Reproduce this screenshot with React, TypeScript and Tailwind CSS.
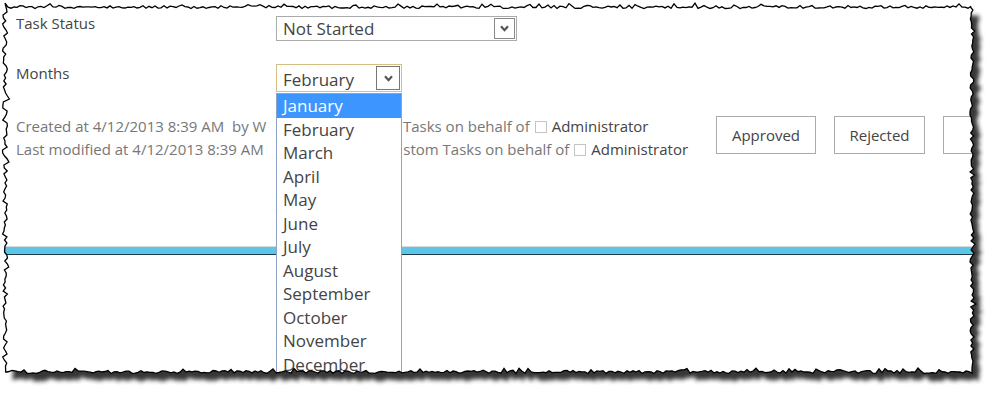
import React from "react";

const MONTHS = [
  "January", "February", "March", "April", "May", "June",
  "July", "August", "September", "October", "November", "December",
];

const FONT = { fontFamily: '"Open Sans", "Noto Sans", sans-serif' };

// torn paper edge, deterministic
function tornPath() {
  let s = 12345;
  const r = () => {
    s = (s * 1664525 + 1013904223) >>> 0;
    return s / 4294967296;
  };
  const pts: [number, number][] = [];
  const L = 5, T = 7, R = 972, B = 372;
  for (let x = L; x < R; x += 3) pts.push([x, T + (r() - 0.5) * 3 + (r() < 0.08 ? -2.5 : 0)]);
  for (let y = T; y < B; y += 3) pts.push([R + (r() - 0.5) * 4 + (r() < 0.1 ? 2 : 0), y]);
  for (let x = R; x > L; x -= 3) pts.push([x, B + (r() - 0.5) * 3 + (r() < 0.08 ? -2.5 : 0)]);
  for (let y = B; y > T; y -= 3) pts.push([L + (r() - 0.5) * 5 + (r() < 0.12 ? 2.5 : 0), y]);
  return "M" + pts.map(([x, y]) => `${x.toFixed(1)} ${y.toFixed(1)}`).join("L") + "Z";
}

function TornEdge() {
  const poly = tornPath();
  const outer = "M0 0H1000V403H0Z";
  return (
    <svg className="pointer-events-none absolute inset-0 z-20" width="1000" height="403" viewBox="0 0 1000 403">
      <defs>
        <clipPath id="outside">
          <path d={`${outer} ${poly}`} clipRule="evenodd" />
        </clipPath>
        <filter id="blur" x="-5%" y="-5%" width="110%" height="110%">
          <feGaussianBlur stdDeviation="2.2" />
        </filter>
      </defs>
      <path d={`${outer} ${poly}`} fill="#fff" fillRule="evenodd" />
      <g clipPath="url(#outside)">
        <path d={poly} transform="translate(7 8)" fill="#222" opacity="0.9" filter="url(#blur)" />
      </g>
      <path d={poly} fill="none" stroke="#000" strokeWidth="1.3" />
    </svg>
  );
}

function Chevron() {
  return (
    <svg width="9" height="7" viewBox="0 0 9 7">
      <path d="M1 1.2 L4.5 5.2 L8 1.2" fill="none" stroke="#555" strokeWidth="2.2" strokeLinejoin="miter" />
    </svg>
  );
}

function Checkbox() {
  return <span className="mx-[5px] inline-block h-[12px] w-[12px] translate-y-[1px] border border-[#c4c4c4] bg-white" />;
}

export default function App() {
  return (
    <div className="relative h-[403px] w-[1000px] overflow-hidden bg-white text-[#444]" style={FONT}>
      <div className="pl-4 pt-[16px]">
        {/* Task Status */}
        <div className="flex">
          <div className="-mt-[4px] w-[260px] text-[15px]">Task Status</div>
          <div className="flex h-[25px] w-[241px] items-center border border-[#ababab] bg-white">
            <span className="flex-1 pl-[6px] text-[17px] leading-none">Not Started</span>
            <span className="mr-[1px] flex h-[21px] w-[21px] items-center justify-center border border-[#8a8a8a]">
              <Chevron />
            </span>
          </div>
        </div>

        {/* Months */}
        <div className="mt-[23px] flex">
          <div className="-mt-[2px] w-[260px] text-[15px]">Months</div>
          <div className="relative">
            <div className="flex h-[28px] w-[126px] items-center border border-[#d6bf86] bg-white">
              <span className="flex-1 pl-[6px] pt-[2px] text-[17px] leading-none">February</span>
              <span className="mr-[1px] flex h-[24px] w-[24px] items-center justify-center border border-[#777]">
                <Chevron />
              </span>
            </div>
            <ul className="absolute left-0 top-[29px] z-10 w-[126px] border border-[#8ea3c6] bg-white">
              {MONTHS.map((m, i) => (
                <li
                  key={m}
                  className={
                    "h-[23.5px] pl-[6px] text-[17px] leading-[24.5px] " +
                    (i === 0 ? "bg-[#3d95ff] text-white" : "text-[#444]")
                  }
                >
                  {m}
                </li>
              ))}
            </ul>
          </div>
        </div>

        {/* meta + buttons (the middle of each line sits under the open list) */}
        <div className="mt-[23px] flex items-start">
          <div className="w-[700px] shrink-0 text-[15px] leading-[23px] text-[#777]">
            <div className="whitespace-nowrap">
              Created at 4/12/2013 8:39 AM&nbsp; by W<span className="invisible">orkflow on Custom </span>Tasks on behalf of
              <Checkbox />
              <span className="text-[#444]">Administrator</span>
            </div>
            <div className="whitespace-nowrap">
              Last modified at 4/12/2013 8:39 AM<span className="invisible">&nbsp; by Workflow on Cu</span>stom Tasks on behalf of
              <Checkbox />
              <span className="text-[#444]">Administrator</span>
            </div>
          </div>
          <div className="mt-[1px] flex shrink-0 gap-[18px]">
            <button className="h-[38px] w-[100px] border border-[#ababab] bg-white text-[15px] text-[#444]">Approved</button>
            <button className="h-[38px] w-[91px] border border-[#ababab] bg-white text-[15px] text-[#444]">Rejected</button>
            <button className="h-[38px] w-[120px] border border-[#ababab] bg-white text-[15px] text-[#444]">Cancel</button>
          </div>
        </div>
      </div>

      {/* separator */}
      <div className="mt-[85px] border-t border-[#d9d9d9]">
        <div className="h-[8px] border-b border-[#1d3b48] bg-[#5cc6e8]" />
      </div>

      <TornEdge />
    </div>
  );
}
